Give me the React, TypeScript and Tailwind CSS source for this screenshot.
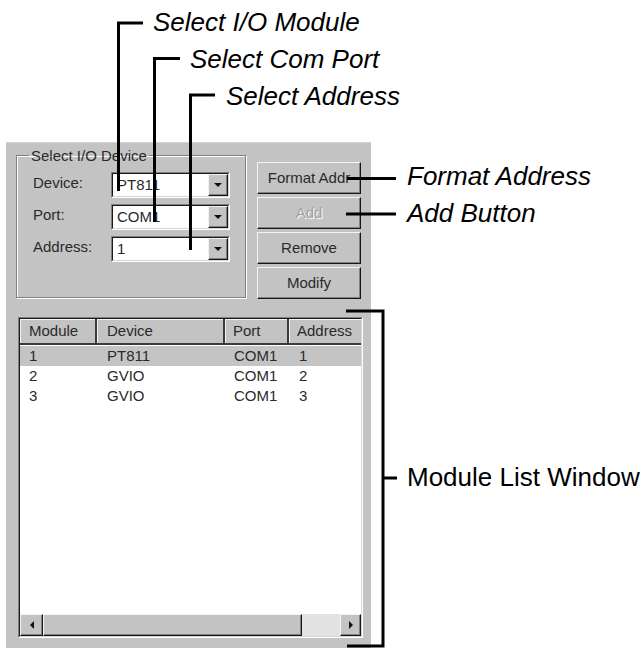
import type { ReactNode } from "react";

const rows = [
  { module: "1", device: "PT811", port: "COM1", address: "1", selected: true },
  { module: "2", device: "GVIO", port: "COM1", address: "2", selected: false },
  { module: "3", device: "GVIO", port: "COM1", address: "3", selected: false },
];

function Arrow({ dir }: { dir: "down" | "left" | "right" }) {
  const pts =
    dir === "down" ? "0,0 8,0 4,4" : dir === "left" ? "4,0 4,8 0,4" : "0,0 0,8 4,4";
  const w = dir === "down" ? 8 : 4;
  const h = dir === "down" ? 4 : 8;
  return (
    <svg width={w} height={h} viewBox={`0 0 ${w} ${h}`}>
      <polygon points={pts} fill="#111" />
    </svg>
  );
}

function Raised({ className, children }: { className: string; children?: ReactNode }) {
  return (
    <div
      className={`flex items-center justify-center bg-[#c3c3c3] border border-t-[#f4f4f4] border-l-[#f4f4f4] border-r-[#161616] border-b-[#161616] shadow-[inset_-1px_-1px_0_#808080] ${className}`}
    >
      {children}
    </div>
  );
}

function Combo({ value }: { value: string }) {
  return (
    <div className="flex h-[26px] w-[119px] border border-t-[#808080] border-l-[#808080] border-r-white border-b-white">
      <div className="flex flex-1 bg-white border border-t-[#1a1a1a] border-l-[#1a1a1a] border-r-[#d6d6d6] border-b-[#d6d6d6]">
        <span className="flex-1 pl-[4px] text-[15px] leading-[22px] text-[#2a2a2a]">{value}</span>
        <Raised className="w-[20px] h-full">
          <Arrow dir="down" />
        </Raised>
      </div>
    </div>
  );
}

function DlgButton({ label, disabled }: { label: string; disabled?: boolean }) {
  return (
    <Raised className="w-[104px] h-[32px] overflow-hidden">
      <span
        className={`whitespace-nowrap text-[15px] ${
          disabled ? "text-[#a2a2a2] [text-shadow:1px_1px_0_#fff]" : "text-[#2a2a2a]"
        }`}
      >
        {label}
      </span>
    </Raised>
  );
}

function HeaderCell({ label, w, pl }: { label: string; w: string; pl: string }) {
  return (
    <div
      className={`${w} ${pl} shrink-0 h-full flex items-center border-r-2 border-r-[#3a3a3a] shadow-[inset_1px_1px_0_#f4f4f4] text-[15px] text-[#2a2a2a] whitespace-nowrap overflow-hidden`}
    >
      {label}
    </div>
  );
}

function ModuleList() {
  return (
    <div className="mt-[17px] ml-[2px] w-[345px] h-[321px] flex border border-t-[#808080] border-l-[#808080] border-r-white border-b-white">
      <div className="flex-1 flex flex-col overflow-hidden bg-white border border-t-[#1a1a1a] border-l-[#1a1a1a] border-r-[#d6d6d6] border-b-[#d6d6d6]">
        {/* header */}
        <div className="h-[26px] shrink-0 flex bg-[#c3c3c3] border-b-2 border-b-[#3a3a3a]">
          <HeaderCell label="Module" w="w-[77px]" pl="pl-[9px]" />
          <HeaderCell label="Device" w="w-[128px]" pl="pl-[10px]" />
          <HeaderCell label="Port" w="w-[64px]" pl="pl-[8px]" />
          <HeaderCell label="Address" w="w-[80px]" pl="pl-[8px]" />
        </div>

        {/* rows */}
        <div className="flex-1 pt-[1px]">
          {rows.map((r) => (
            <div
              key={r.module}
              className={`h-[20px] flex items-center text-[15px] text-[#2a2a2a] ${r.selected ? "bg-[#c4c4c4]" : ""}`}
            >
              <span className="w-[77px] pl-[9px]">{r.module}</span>
              <span className="w-[128px] pl-[10px]">{r.device}</span>
              <span className="w-[64px] pl-[9px]">{r.port}</span>
              <span className="pl-[10px]">{r.address}</span>
            </div>
          ))}
        </div>

        {/* horizontal scrollbar */}
        <div className="h-[22px] shrink-0 flex bg-[#e2e2e2]">
          <Raised className="w-[23px] h-full">
            <Arrow dir="left" />
          </Raised>
          <Raised className="w-[259px] h-full" />
          <div className="flex-1" />
          <Raised className="w-[21px] h-full">
            <Arrow dir="right" />
          </Raised>
        </div>
      </div>
    </div>
  );
}

function Dialog() {
  return (
    <div className="ml-[6px] w-[365px] h-[506px] shrink-0 bg-[#c3c3c3] pl-[10px] flex flex-col border-t border-t-[#d4d4d4]">
      <div className="h-[157px] flex items-start">
        <fieldset className="mt-[4px] w-[230px] h-[151px] border border-[#808080] shadow-[inset_1px_1px_0_#fff,1px_1px_0_#fff] pt-[8px]">
          <legend className="ml-[12px] px-[2px] text-[15px] leading-[17px] text-[#2a2a2a]">
            Select I/O Device
          </legend>
          <div className="pl-[16px] flex flex-col gap-[6px]">
            {[
              ["Device:", "PT811"],
              ["Port:", "COM1"],
              ["Address:", "1"],
            ].map(([label, value]) => (
              <div key={label} className="flex items-center">
                <span className="w-[78px] text-[15px] text-[#2a2a2a] -mt-[3px]">{label}</span>
                <Combo value={value} />
              </div>
            ))}
          </div>
        </fieldset>

        <div className="ml-[11px] mt-[19px] flex flex-col gap-[3px]">
          <DlgButton label="Format Addr" />
          <DlgButton label="Add" disabled />
          <DlgButton label="Remove" />
          <DlgButton label="Modify" />
        </div>
      </div>

      <ModuleList />
    </div>
  );
}

export default function App() {
  return (
    <div className="relative w-[643px] h-[648px] overflow-hidden bg-white font-['Liberation_Sans',Arial,sans-serif] text-black">
      {/* top callout labels */}
      <div className="h-[142px] pt-[9px] flex flex-col gap-[11px] italic text-[26px] leading-[26px]">
        <div className="pl-[153px]">Select I/O Module</div>
        <div className="pl-[190px]">Select Com Port</div>
        <div className="pl-[226px]">Select Address</div>
      </div>

      <div className="flex">
        <Dialog />

        {/* right callout labels */}
        <div className="pl-[36px] flex flex-col text-[26px] leading-[26px] whitespace-nowrap">
          <div className="mt-[21px] italic">Format Address</div>
          <div className="mt-[11px] italic">Add Button</div>
          <div className="mt-[238px]">Module List Window</div>
        </div>
      </div>

      {/* callout lines */}
      <svg
        className="absolute inset-0 pointer-events-none"
        width="643"
        height="648"
        viewBox="0 0 643 648"
        fill="none"
        stroke="#000"
        strokeWidth="3"
      >
        <polyline points="143,23 118.5,23 118.5,191" />
        <polyline points="180,58.5 154.5,58.5 154.5,222" />
        <polyline points="215,95 190.5,95 190.5,250" />
        <line x1="347" y1="178.5" x2="396" y2="178.5" />
        <line x1="346" y1="214" x2="396" y2="214" />
        <polyline points="346,311 383,311 383,646 347,646" />
        <line x1="383" y1="478" x2="397" y2="478" />
      </svg>
    </div>
  );
}
